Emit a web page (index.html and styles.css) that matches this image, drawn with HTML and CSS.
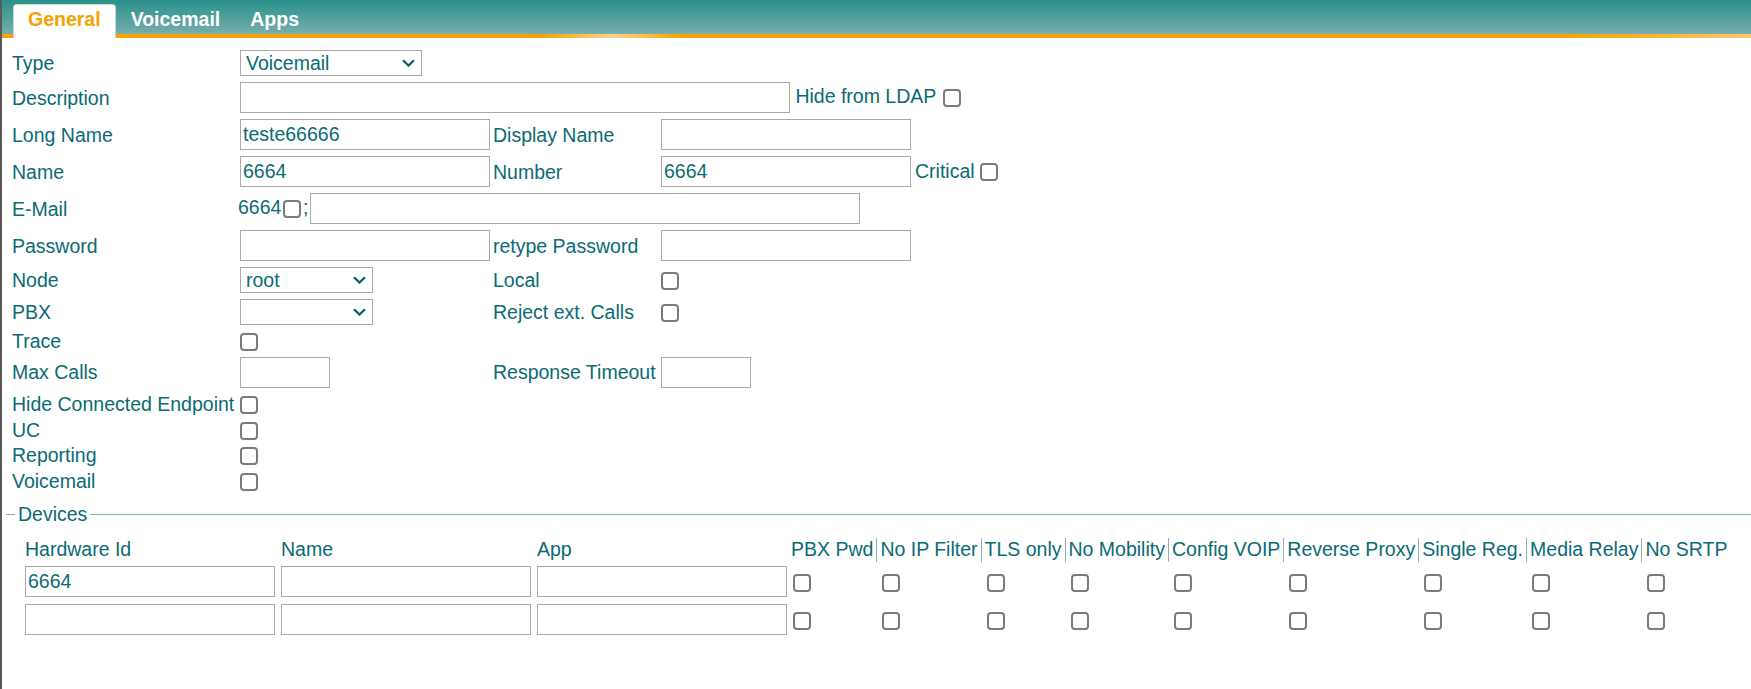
FILE: index.html
```html
<!DOCTYPE html>
<html lang="en">
<head>
    <meta charset="UTF-8">
    <title>User - General</title>
    <link rel="stylesheet" href="styles.css">
</head>
<body>
    <div class="tabs">
        <div class="tab active">General</div>
        <div class="tab">Voicemail</div>
        <div class="tab">Apps</div>
    </div>

    <table class="form">
        <colgroup>
            <col class="c1"><col class="c2"><col class="c3"><col class="c4"><col class="c5">
        </colgroup>
        <tr>
            <td>Type</td>
            <td colspan="4">
                <span class="sel sel-type">
                    <select><option>Voicemail</option></select>
                    <svg viewBox="0 0 13 8"><path d="M1 1.2 L6.5 6.6 L12 1.2"/></svg>
                </span>
            </td>
        </tr>
        <tr>
            <td>Description</td>
            <td colspan="4"><input class="txt w-wide" type="text"> Hide from LDAP <input class="cb" type="checkbox"></td>
        </tr>
        <tr>
            <td>Long Name</td>
            <td><input class="txt" type="text" value="teste66666"></td>
            <td>Display Name</td>
            <td><input class="txt" type="text"></td>
            <td></td>
        </tr>
        <tr>
            <td>Name</td>
            <td><input class="txt" type="text" value="6664"></td>
            <td>Number</td>
            <td><input class="txt" type="text" value="6664"></td>
            <td class="extra">Critical<input class="cb" type="checkbox"></td>
        </tr>
        <tr>
            <td>E-Mail</td>
            <td colspan="4" class="email">6664<input class="cb" type="checkbox">;<input class="txt w-wide" type="text"></td>
        </tr>
        <tr>
            <td>Password</td>
            <td><input class="txt" type="password"></td>
            <td>retype Password</td>
            <td><input class="txt" type="password"></td>
            <td></td>
        </tr>
        <tr>
            <td>Node</td>
            <td>
                <span class="sel sel-node">
                    <select><option>root</option></select>
                    <svg viewBox="0 0 13 8"><path d="M1 1.2 L6.5 6.6 L12 1.2"/></svg>
                </span>
            </td>
            <td>Local</td>
            <td><input class="cb" type="checkbox"></td>
            <td></td>
        </tr>
        <tr>
            <td>PBX</td>
            <td>
                <span class="sel sel-node">
                    <select><option></option></select>
                    <svg viewBox="0 0 13 8"><path d="M1 1.2 L6.5 6.6 L12 1.2"/></svg>
                </span>
            </td>
            <td>Reject ext. Calls</td>
            <td><input class="cb" type="checkbox"></td>
            <td></td>
        </tr>
        <tr>
            <td>Trace</td>
            <td colspan="4"><input class="cb" type="checkbox"></td>
        </tr>
        <tr>
            <td>Max Calls</td>
            <td><input class="txt w-short" type="text"></td>
            <td>Response Timeout</td>
            <td><input class="txt w-short" type="text"></td>
            <td></td>
        </tr>
        <tr>
            <td>Hide Connected Endpoint</td>
            <td colspan="4"><input class="cb" type="checkbox"></td>
        </tr>
        <tr>
            <td>UC</td>
            <td colspan="4"><input class="cb" type="checkbox"></td>
        </tr>
        <tr>
            <td>Reporting</td>
            <td colspan="4"><input class="cb" type="checkbox"></td>
        </tr>
        <tr>
            <td>Voicemail</td>
            <td colspan="4"><input class="cb" type="checkbox"></td>
        </tr>
    </table>

    <fieldset class="devices">
        <legend>Devices</legend>
        <table class="dev">
            <tr>
                <th>Hardware Id</th>
                <th>Name</th>
                <th>App</th>
                <th class="first">PBX Pwd</th>
                <th class="sep">No IP Filter</th>
                <th class="sep">TLS only</th>
                <th class="sep">No Mobility</th>
                <th class="sep">Config VOIP</th>
                <th class="sep">Reverse Proxy</th>
                <th class="sep">Single Reg.</th>
                <th class="sep">Media Relay</th>
                <th class="sep">No SRTP</th>
            </tr>
            <tr>
                <td><input class="txt" type="text" value="6664"></td>
                <td><input class="txt" type="text"></td>
                <td><input class="txt" type="text"></td>
                <td class="chk first"><input class="cb" type="checkbox"></td>
                <td class="chk"><input class="cb" type="checkbox"></td>
                <td class="chk"><input class="cb" type="checkbox"></td>
                <td class="chk"><input class="cb" type="checkbox"></td>
                <td class="chk"><input class="cb" type="checkbox"></td>
                <td class="chk"><input class="cb" type="checkbox"></td>
                <td class="chk"><input class="cb" type="checkbox"></td>
                <td class="chk"><input class="cb" type="checkbox"></td>
                <td class="chk"><input class="cb" type="checkbox"></td>
            </tr>
            <tr>
                <td><input class="txt" type="text"></td>
                <td><input class="txt" type="text"></td>
                <td><input class="txt" type="text"></td>
                <td class="chk first"><input class="cb" type="checkbox"></td>
                <td class="chk"><input class="cb" type="checkbox"></td>
                <td class="chk"><input class="cb" type="checkbox"></td>
                <td class="chk"><input class="cb" type="checkbox"></td>
                <td class="chk"><input class="cb" type="checkbox"></td>
                <td class="chk"><input class="cb" type="checkbox"></td>
                <td class="chk"><input class="cb" type="checkbox"></td>
                <td class="chk"><input class="cb" type="checkbox"></td>
                <td class="chk"><input class="cb" type="checkbox"></td>
            </tr>
        </table>
    </fieldset>
</body>
</html>
```

FILE: styles.css
```css
body {
    margin: 0;
    min-height: 100vh;
    box-sizing: border-box;
    border-left: 2px solid #585858;
    background: #fff;
    font-family: "Liberation Sans", Arial, sans-serif;
    font-size: 19.5px;
    color: #0a6b74;
}

/* tab bar */
.tabs {
    display: flex;
    align-items: flex-end;
    height: 38px;
    box-sizing: border-box;
    padding-left: 11px;
    background:
        linear-gradient(to right, #f7a200 0, #f7a200 540px, #fbd58a 610px, #f7a200 680px, #f7a200 1560px, #fdc869 100%) bottom / 100% 4px no-repeat,
        linear-gradient(#2a908a, #77aeae) top / 100% 34px no-repeat;
}
.tab {
    height: 34px;
    box-sizing: border-box;
    padding: 4px 15px 0;
    line-height: 22px;
    font-weight: bold;
    color: #fff;
}
.tab.active {
    padding: 3px 14px 0;
    background: #fff;
    color: #f5a300;
    border: 1px solid #cdd5d5;
    border-bottom: none;
    border-radius: 4px 4px 0 0;
}

/* main form */
.form {
    margin: 9px 0 0 10px;
    border-spacing: 0;
    table-layout: fixed;
    width: 1082px;
}
.form .c1 { width: 226px; }
.form .c2 { width: 255px; }
.form .c3 { width: 166px; }
.form .c4 { width: 255px; }
.form .c5 { width: 180px; }
.form td {
    padding: 3px 0;
    line-height: 18px;
    white-space: nowrap;
    vertical-align: middle;
}
.form td.extra {
    padding-left: 1px;
}
.form td.extra .cb {
    margin-left: 5px;
}

.txt {
    width: 250px;
    height: 31px;
    box-sizing: border-box;
    margin: 0 0 0 2px;
    padding: 0 2px;
    border: 1px solid #a9a9a9;
    border-radius: 0;
    font: inherit;
    color: inherit;
    vertical-align: middle;
    outline: none;
}
.w-wide { width: 550px; }
.w-short { width: 90px; }

.cb {
    -webkit-appearance: none;
    appearance: none;
    width: 18px;
    height: 18px;
    box-sizing: border-box;
    margin: 0 0 0 2px;
    border: 2px solid #7b7b7b;
    border-radius: 4px;
    background: #fff;
    vertical-align: middle;
}
.email .cb {
    margin: 0 2px 0 1.5px;
}

.sel {
    position: relative;
    display: inline-block;
    margin-left: 2px;
    vertical-align: middle;
}
.sel-type { width: 182px; }
.sel-node { width: 133px; }
.sel select {
    -webkit-appearance: none;
    appearance: none;
    display: block;
    width: 100%;
    height: 26px;
    box-sizing: border-box;
    margin: 0;
    padding: 0 0 0 5px;
    border: 1px solid #a9a9a9;
    border-radius: 0;
    background: #fff;
    font: inherit;
    color: inherit;
    outline: none;
}
.sel svg {
    position: absolute;
    right: 7px;
    top: 9px;
    width: 13px;
    height: 8px;
    pointer-events: none;
}
.sel svg path {
    fill: none;
    stroke: #0b5f67;
    stroke-width: 2.2;
}

/* devices */
.devices {
    margin: 9px 0 0 4px;
    padding: 13px 0 0 0;
    min-width: 0;
    border: 0;
    border-top: 1px solid #86adaf;
}
.devices legend {
    margin-left: 9px;
    padding: 0 3px;
    line-height: 22px;
}
.dev {
    margin-left: 16px;
    border-spacing: 0;
}
.dev th {
    padding: 0 3px 2px;
    line-height: 22px;
    font-weight: normal;
    text-align: left;
    white-space: nowrap;
    vertical-align: top;
}
.dev th.first {
    padding-left: 1px;
}
.dev th.sep {
    border-left: 1px solid #8db4b6;
}
.dev td {
    padding: 3.5px 3px;
    vertical-align: middle;
}
.dev td .txt {
    margin: 0;
    display: block;
}
.dev td.chk {
    padding-left: 5px;
    border-left: 1px solid transparent;
}
.dev td.chk.first {
    padding-left: 3px;
    border-left: none;
}
.dev td.chk .cb {
    margin: 0;
}
```
